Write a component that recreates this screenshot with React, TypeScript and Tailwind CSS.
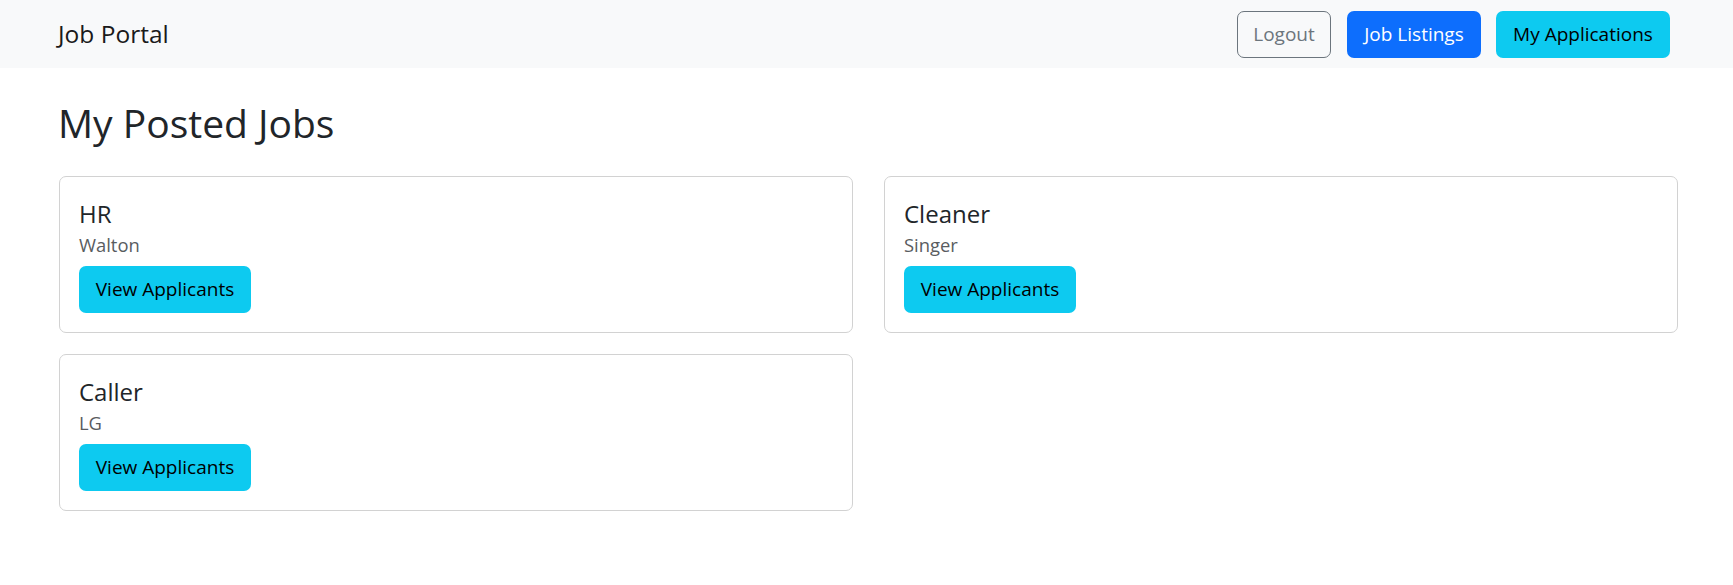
import React from 'react';

type Job = { id: number; title: string; company: string };

const jobs: Job[] = [
  { id: 1, title: 'HR', company: 'Walton' },
  { id: 2, title: 'Cleaner', company: 'Singer' },
  { id: 3, title: 'Caller', company: 'LG' },
];

const JobCard: React.FC<{ job: Job }> = ({ job }) => (
  <div className="border border-[#d2d2d2] rounded-[7px] bg-white p-[19px]">
    <h4 className="text-[24px] leading-[35px] font-normal text-[#212529]">{job.title}</h4>
    <h6 className="text-[18.4px] leading-[28px] font-normal text-[#595c5f]">{job.company}</h6>
    <button className="mt-[7px] w-[172px] h-[47px] rounded-[7px] bg-[#0dcaf0] text-black text-[19px]">
      View Applicants
    </button>
  </div>
);

export default function App() {
  return (
    <div className="min-h-screen bg-white font-['Open_Sans',sans-serif] text-[#212529]">
      {/* Navbar */}
      <nav className="h-[68px] bg-[#f8f9fa] flex items-center justify-between pl-[58px] pr-[63px]">
        <span className="text-[24.5px] text-[#1a1a1a]">Job Portal</span>
        <div className="flex items-center">
          <button className="w-[94px] h-[47px] rounded-[7px] border border-[#6c757d] text-[#6c757d] text-[19px]">
            Logout
          </button>
          <button className="ml-[16px] w-[134px] h-[47px] rounded-[7px] bg-[#0d6efd] text-white text-[19px]">
            Job Listings
          </button>
          <button className="ml-[15px] w-[174px] h-[47px] rounded-[7px] bg-[#0dcaf0] text-black text-[19px]">
            My Applications
          </button>
        </div>
      </nav>

      {/* Posted jobs */}
      <div className="pl-[58px] pt-[32px]">
        <h2 className="text-[39px] leading-[46px] font-normal mb-[30px]">My Posted Jobs</h2>
        <div className="ml-[1px] mr-[55px] grid grid-cols-2 gap-x-[31px] gap-y-[21px]">
          {jobs.map((job) => (
            <JobCard key={job.id} job={job} />
          ))}
        </div>
      </div>
    </div>
  );
}
